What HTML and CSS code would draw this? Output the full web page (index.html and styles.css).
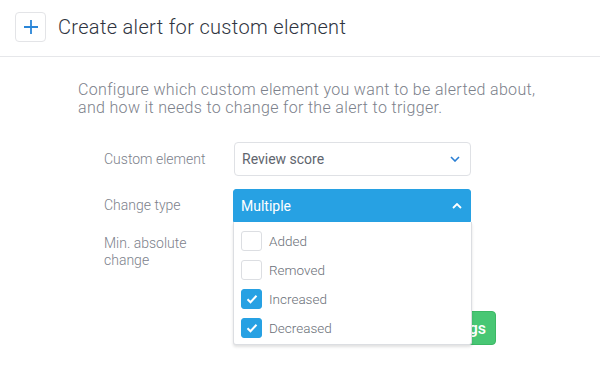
FILE: index.html
```html
<!DOCTYPE html>
<html>
<head>
<meta charset="utf-8">
<link rel="stylesheet" href="styles.css">
</head>
<body>
<header class="header">
  <div class="plus-box">
    <svg width="16" height="16" viewBox="0 0 16 16"><path d="M8 1v14M1 8h14" stroke="#2a86d8" stroke-width="1.8" fill="none"/></svg>
  </div>
  <h1 class="title">Create alert for custom element</h1>
</header>
<main class="content">
  <p class="desc">Configure which custom element you want to be alerted about,<br>and how it needs to change for the alert to trigger.</p>
  <div class="form">
    <div class="row">
      <div class="label">Custom element</div>
      <div class="select">
        <span>Review score</span>
        <svg width="10" height="6" viewBox="0 0 10 6"><path d="M1 1l4 4 4-4" stroke="#2a7fd4" stroke-width="1.6" fill="none"/></svg>
      </div>
    </div>
    <div class="row row-open">
      <div class="label">Change type</div>
      <div class="select-wrap">
        <div class="select select-open">
          <span>Multiple</span>
          <svg width="10" height="6" viewBox="0 0 10 6"><path d="M1 5l4-4 4 4" stroke="#ffffff" stroke-width="1.8" fill="none"/></svg>
        </div>
        <ul class="dropdown">
          <li class="option"><span class="check"></span>Added</li>
          <li class="option"><span class="check"></span>Removed</li>
          <li class="option"><span class="check checked"><svg width="12" height="10" viewBox="0 0 12 10"><path d="M1.5 5.2l3 3 6-6.4" stroke="#fff" stroke-width="2" fill="none"/></svg></span>Increased</li>
          <li class="option"><span class="check checked"><svg width="12" height="10" viewBox="0 0 12 10"><path d="M1.5 5.2l3 3 6-6.4" stroke="#fff" stroke-width="2" fill="none"/></svg></span>Decreased</li>
        </ul>
      </div>
    </div>
    <div class="row row-tall">
      <div class="label">Min. absolute<br>change</div>
    </div>
    <div class="actions">
      <button class="btn">Create alert with settings</button>
    </div>
  </div>
</main>
</body>
</html>
```
FILE: styles.css
```css
* { box-sizing: border-box; }
html, body { margin: 0; padding: 0; background: #fff; }
body { font-family: Roboto, "Liberation Sans", sans-serif; width: 600px; height: 383px; overflow: hidden; }
.header {
  height: 57px;
  border-bottom: 1px solid #e6e7ea;
  display: flex;
  align-items: center;
  padding-left: 15px;
  padding-bottom: 2px;
}
.plus-box {
  width: 31px; height: 30px;
  border: 1px solid #e3e4e7;
  border-radius: 4px;
  display: flex; align-items: center; justify-content: center;
}
.title {
  margin: 0 0 0 12px;
  font-size: 20px;
  font-weight: 300;
  letter-spacing: 0.33px;
  color: #2f3440;
}
.content { padding: 24px 0 0 78px; }
.desc {
  margin: 0;
  font-size: 16px;
  font-weight: 300;
  letter-spacing: 0.33px;
  line-height: 18px;
  color: #7c818b;
}
.form { margin: 25px 0 0 26px; width: 392px; }
.row { display: flex; align-items: center; height: 34px; }
.row + .row { margin-top: 13px; }
.row-open { height: 33px; }
.row-tall { align-items: flex-start; height: 40px; }
.label {
  width: 130px;
  font-size: 14px;
  font-weight: 300;
  line-height: 17px;
  color: #7c818b;
}
.select {
  width: 237px; height: 34px;
  border: 1px solid #dfe1e5;
  border-radius: 4px;
  display: flex; align-items: center; justify-content: space-between;
  padding: 0 10px 0 7px;
  font-size: 14px;
  color: #60656e;
}
.select-wrap { position: relative; width: 238px; }
.select-open {
  width: 238px; height: 33px;
  background: #27a1e3;
  border-color: #27a1e3;
  border-radius: 3px 3px 0 0;
  color: #fff;
  padding-left: 7px;
  padding-right: 8px;
  margin-left: -1px;
}
.dropdown {
  position: absolute;
  left: -1px; top: 33px;
  width: 239px;
  margin: 0;
  padding: 4px 0 2px 7px;
  list-style: none;
  background: #fff;
  border: 1px solid #dcdee2;
  border-top: none;
  border-radius: 0 0 3px 3px;
  box-shadow: 0 2px 3px rgba(0,0,0,0.12);
  z-index: 2;
}
.option {
  height: 29px;
  display: flex; align-items: center;
  font-size: 13.5px;
  font-weight: 300;
  color: #6a6f78;
}
.check {
  width: 21px; height: 20px;
  border: 1px solid #dcdee2;
  border-radius: 3px;
  margin-right: 7px;
  display: flex; align-items: center; justify-content: center;
}
.check.checked { background: #27a1e3; border-color: #27a1e3; }
.actions { display: flex; justify-content: flex-end; margin-top: 36px; }
.btn {
  height: 34px;
  background: #48c774;
  border: 1px solid #3cb865;
  border-radius: 4px;
  color: #fff;
  font-family: Roboto, "Liberation Sans", sans-serif;
  font-size: 16px;
  font-weight: 500;
  padding: 0 9px 0 12px;
}
```
